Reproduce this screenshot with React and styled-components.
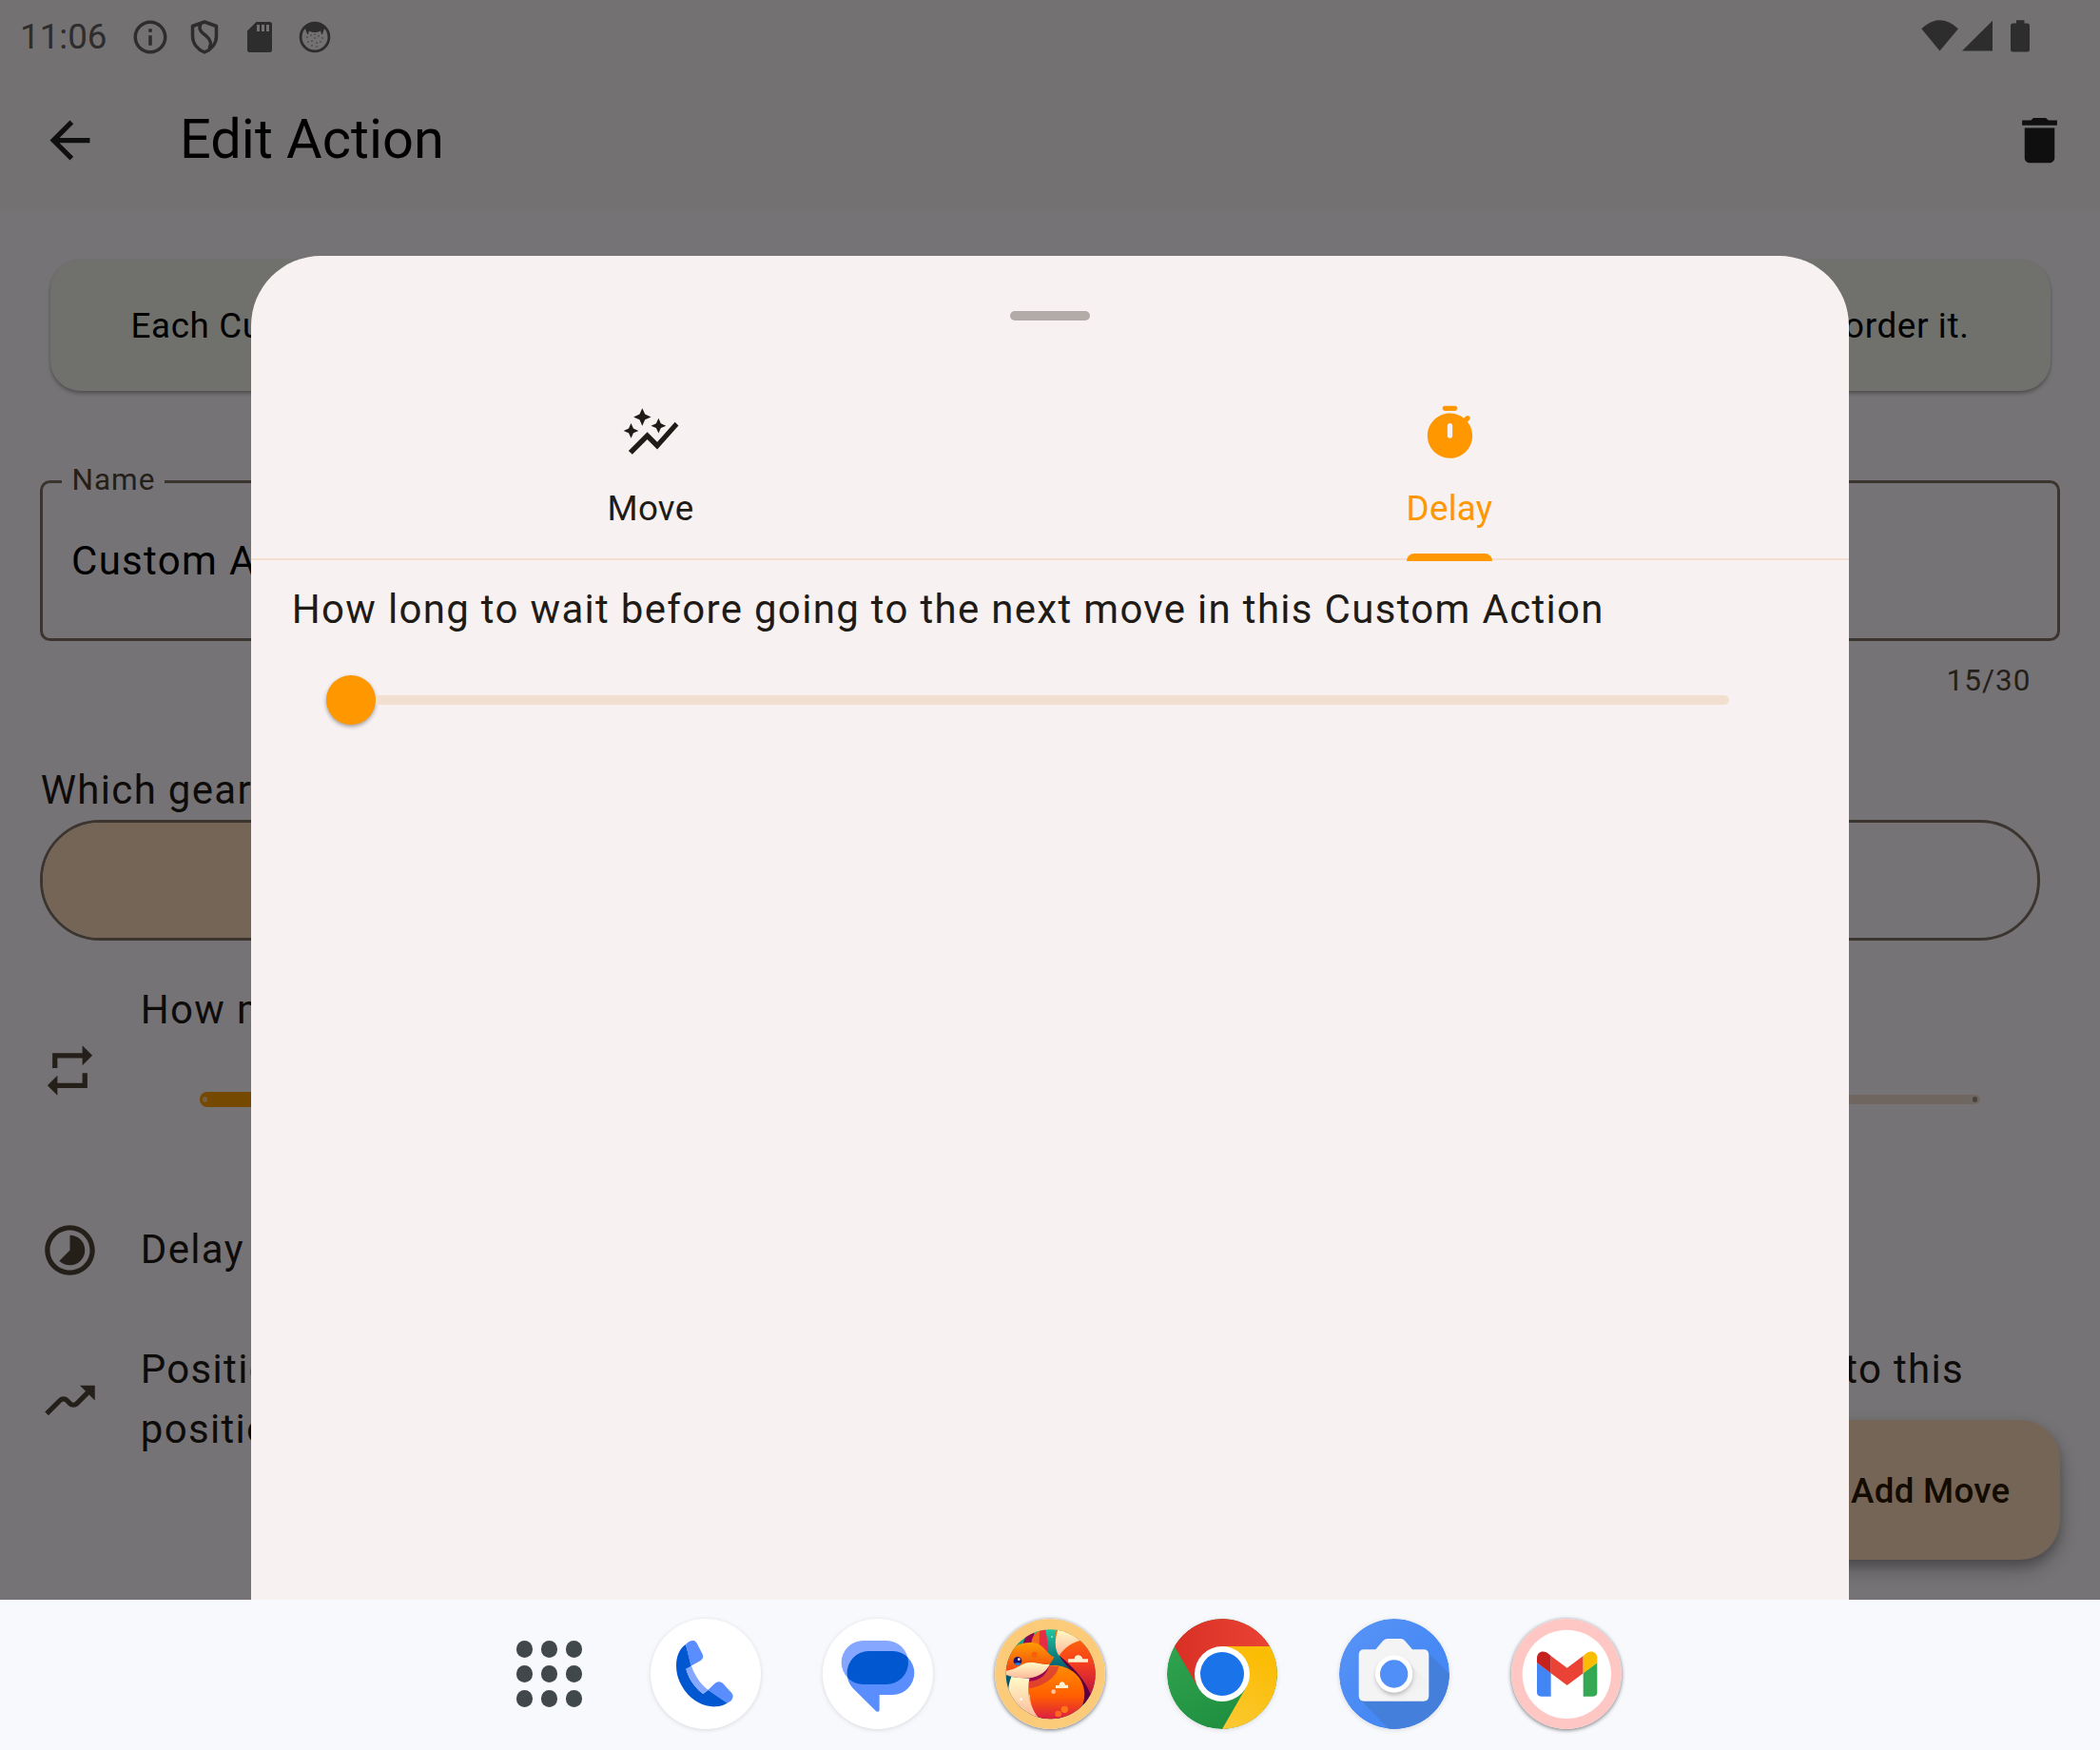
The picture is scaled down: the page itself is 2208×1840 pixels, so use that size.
import React from 'react';
import styled, { createGlobalStyle } from 'styled-components';
import { MdArrowBack, MdDelete, MdRepeat, MdTimelapse, MdMoving, MdAutoGraph } from 'react-icons/md';

const GlobalStyle = createGlobalStyle`
  * { box-sizing: border-box; }
  body { margin: 0; background: #f8f9fd; font-family: Roboto, "Liberation Sans", sans-serif; }
`;

const Device = styled.div`
  width: 2208px;
  height: 1840px;
  display: flex;
  flex-direction: column;
  overflow: hidden;
`;

const Screen = styled.div`
  position: relative;
  height: 1682px;
  flex: none;
  display: flex;
  flex-direction: column;
  background: #fffbff;
  overflow: hidden;
`;

const StatusBar = styled.div`
  height: 74px;
  flex: none;
  display: flex;
  align-items: center;
  justify-content: space-between;
  padding: 3px 71px 0 21px;
  background: #fdf6f8;
  color: #626262;
`;

const StatusGroup = styled.div`
  display: flex;
  align-items: center;
  gap: ${(p) => p.$gap}px;
`;

const Clock = styled.span`
  font-size: 36.75px;
  line-height: 44px;
  width: 99.75px;
  white-space: nowrap;
`;

const StatusIcon = styled.svg`
  display: block;
  fill: currentColor;
`;

const SignalIcon = styled(StatusIcon)`
  margin-bottom: 2px;
`;

const AppBar = styled.header`
  height: 147px;
  flex: none;
  display: flex;
  align-items: center;
  padding: 0 32px 0 42px;
  background: #fdf6f8;
  color: #222;
  svg { width: 63px; height: 63px; flex: none; }
`;

const Title = styled.h1`
  flex: 1;
  margin: 0 0 0 84px;
  padding-bottom: 3px;
  font-size: 57.75px;
  line-height: 74px;
  font-weight: 400;
  color: #000;
`;

const Content = styled.main`
  display: flex;
  flex-direction: column;
  padding: 52px 42px 0;
  color: #1f1b16;
`;

const InfoCard = styled.div`
  display: flex;
  justify-content: space-between;
  margin: 0 10.5px;
  padding: 44px 85px 41px;
  border-radius: 31.5px;
  background: #f4f3ec;
  box-shadow: 0 3px 4px rgba(0, 0, 0, 0.26), 0 1px 3px rgba(0, 0, 0, 0.1);
  color: #000;
  font-size: 36.75px;
  line-height: 52.5px;
  letter-spacing: 0.656px;
  white-space: nowrap;
`;

const Field = styled.fieldset`
  height: 180px;
  margin: 83px 0 0;
  padding: 0 28.5px;
  border: 3px solid #837468;
  border-radius: 10.5px;
`;

const FieldLabel = styled.legend`
  height: 26px;
  padding: 0 9.5px 0 11px;
  margin-left: -9px;
  font-size: 31.5px;
  line-height: 22px;
  letter-spacing: 1px;
  color: #51453a;
`;

const FieldValue = styled.div`
  padding: 38px 0 0 1.5px;
  font-size: 42px;
  line-height: 63px;
  letter-spacing: 1.3125px;
  color: #000;
  white-space: nowrap;
`;

const Counter = styled.div`
  margin: 21px 30.5px 0 0;
  text-align: right;
  font-size: 31.5px;
  line-height: 42px;
  letter-spacing: 1.05px;
  color: #51453a;
`;

const BodyText = styled.p`
  margin: 0;
  padding-left: 0.8px;
  font-size: 42px;
  line-height: 63px;
  letter-spacing: 1.3125px;
  white-space: nowrap;
`;

const GearLabel = styled(BodyText)`
  margin-top: 62px;
`;

const Segmented = styled.div`
  display: flex;
  height: 126.5px;
  margin: 0.5px 21px 0 0;
  border: 3px solid #837468;
  border-radius: 63px;
  overflow: hidden;
`;

const Segment = styled.div`
  flex: 1;
  background: ${(p) => (p.$selected ? '#ffddbc' : 'transparent')};
`;

const Setting = styled.section`
  display: flex;
  align-items: center;
  gap: 42px;
  height: ${(p) => p.$height}px;
  margin-top: ${(p) => p.$top}px;
  > svg { width: 63px; height: 63px; margin-top: ${(p) => p.$iconDrop || 1}px; color: #51453a; flex: none; }
`;

const SettingBody = styled.div`
  flex: 1;
`;

const TextEnds = styled.div`
  display: flex;
  justify-content: space-between;
  padding-right: 101px;
`;

const RepeatSlider = styled.div`
  display: flex;
  align-items: center;
  height: 127px;
  padding: 0 84px 0 63px;
`;

const ActiveTrack = styled.div`
  display: flex;
  align-items: center;
  width: 400px;
  height: 15.75px;
  padding-left: 3px;
  border-radius: 8px 0 0 8px;
  background: #ff9f00;
`;

const InactiveTrack = styled.div`
  flex: 1;
  display: flex;
  align-items: center;
  justify-content: flex-end;
  height: 10.5px;
  padding-right: 3px;
  border-radius: 0 5.25px 5.25px 0;
  background: #f2dfd0;
`;

const Tick = styled.span`
  width: 5.25px;
  height: 5.25px;
  border-radius: 50%;
  background: ${(p) => p.$color};
`;

const Fab = styled.button`
  position: absolute;
  right: 42px;
  bottom: 42px;
  width: 330px;
  height: 147px;
  padding: 3px 52.5px 0 0;
  border: 0;
  border-radius: 42px;
  background: #ffddbc;
  box-shadow: 0 10px 22px rgba(0, 0, 0, 0.24), 0 6px 12px rgba(0, 0, 0, 0.2);
  color: #2b1700;
  font: 500 36.75px/52.5px Roboto, "Liberation Sans", sans-serif;
  letter-spacing: 0.2625px;
  text-align: right;
`;

const Scrim = styled.div`
  position: absolute;
  inset: 0;
  background: rgba(0, 0, 0, 0.54);
`;

const Sheet = styled.div`
  position: absolute;
  left: 264px;
  top: 269px;
  bottom: 0;
  width: 1680px;
  display: flex;
  flex-direction: column;
  border-radius: 73.5px 73.5px 0 0;
  background: #f8f1f1;
  color: #1f1b16;
`;

const HandleArea = styled.div`
  height: 126px;
  display: flex;
  align-items: center;
  justify-content: center;
`;

const Handle = styled.div`
  width: 84px;
  height: 10.5px;
  border-radius: 5.25px;
  background: #b2aba7;
`;

const Tabs = styled.div`
  display: flex;
  height: 194px;
  border-bottom: 2px solid #f2dfd0;
`;

const Tab = styled.div`
  flex: 1;
  display: flex;
  flex-direction: column;
  align-items: center;
  height: 194.5px;
  padding-top: 28.5px;
  color: ${(p) => (p.$active ? '#ff9800' : '#1f1b16')};
  svg { width: 63px; height: 63px; flex: none; fill: currentColor; }
`;

const TabLabel = styled.span`
  margin-top: 22px;
  font-size: 36.75px;
  line-height: 52.5px;
  letter-spacing: 0.26px;
`;

const Indicator = styled.div`
  width: 90px;
  height: 8px;
  margin-top: auto;
  border-radius: 7.875px 7.875px 0 0;
  background: #ff9800;
`;

const Question = styled(BodyText)`
  margin: 20px 42px 0;
`;

const DelaySlider = styled.div`
  display: flex;
  align-items: center;
  height: 126px;
  margin-top: 1px;
  padding: 0 126px 0 78.5px;
`;

const Thumb = styled.div`
  width: 52.5px;
  height: 52.5px;
  flex: none;
  border-radius: 50%;
  background: #ff9800;
  box-shadow: 0 2px 4px rgba(0, 0, 0, 0.35);
`;

const DelayTrack = styled.div`
  flex: 1;
  height: 10.5px;
  border-radius: 0 5.25px 5.25px 0;
  background: #f2dfd0;
`;

const Taskbar = styled.nav`
  flex: 1;
  display: flex;
  align-items: center;
  gap: 65px;
  padding: 0 0 2px 535.4px;
  background: #f8f9fd;
`;

const AppGrid = styled.div`
  width: 84px;
  display: grid;
  grid-template-columns: repeat(3, 17.4px);
  gap: 8.6px;
  justify-content: center;
`;

const GridDot = styled.span`
  height: 17.4px;
  border-radius: 50%;
  background: #41484b;
`;

const AppIcon = styled.svg`
  width: 116px;
  height: 116px;
  flex: none;
  display: block;
  border-radius: 50%;
  box-shadow: 0 1px ${(p) => (p.$strong ? 4 : 5)}px rgba(0, 0, 0, ${(p) => (p.$strong ? 0.55 : 0.13)});
`;

const TimerIcon = () => (
  <svg viewBox="0 0 24 24">
    <path fillRule="evenodd" d="M14 1h-4c-.55 0-1 .45-1 1s.45 1 1 1h4c.55 0 1-.45 1-1s-.45-1-1-1zm-2 13c.55 0 1-.45 1-1V9c0-.55-.45-1-1-1s-1 .45-1 1v4c0 .55.45 1 1 1zm7.03-6.61l.75-.75c.38-.38.39-1.01 0-1.4l-.01-.01c-.39-.39-1.01-.38-1.4 0l-.75.75C16.07 4.74 14.12 4 12 4c-4.8 0-8.88 3.96-9 8.76C2.87 17.84 6.94 22 12 22c4.98 0 9-4.03 9-9 0-2.12-.74-4.07-1.97-5.61z" />
  </svg>
);

const Phone = () => (
  <AppIcon viewBox="493 66 348 348">
    <circle cx="667" cy="240" r="174" fill="#fff" />
    <path fill="#0057cf" d="M604 147C574 167 567 213 581 255C602 312 651 346 700 343C715 343 727 338 736 331L675 290L659 303C632 283 612 252 605 224L622 215Z" />
    <path fill="#5a8eff" d="M604 147C611 138 622 132 632 136C638 139 640 145 643 151L657 178C661 187 658 193 651 198L620 215Z" />
    <path fill="#85a7ff" d="M605 224L622 215C633 245 650 272 675 291L659 303C632 283 612 252 605 224Z" />
    <path fill="#5a8eff" d="M674 291L696 270C706 262 715 264 722 271L747 298C755 307 754 314 749 322C745 328 737 332 731 330Z" />
  </AppIcon>
);

const Messages = () => (
  <AppIcon viewBox="1036 66 348 348">
    <defs>
      <clipPath id="bubbleBack"><rect x="1095" y="135" width="211" height="138" rx="69" /></clipPath>
    </defs>
    <circle cx="1210" cy="240" r="174" fill="#fff" />
    <rect x="1095" y="135" width="211" height="138" rx="69" fill="#85a7ff" />
    <path fill="#5a8eff" d="M1182 168H1256A69 69 0 0 1 1256 306H1215V353C1215 360 1207 361 1203 356L1134 288C1119 273 1113 255 1113 237A69 69 0 0 1 1182 168Z" />
    <rect x="1113" y="168" width="212" height="138" rx="69" fill="#0057cf" clipPath="url(#bubbleBack)" />
  </AppIcon>
);

const Fox = () => (
  <AppIcon $strong viewBox="78 66 348 348">
    <defs>
      <clipPath id="foxClip"><circle cx="254" cy="241" r="141" /></clipPath>
      <linearGradient id="foxSky" x1="0" y1="0" x2="0" y2="1"><stop offset="0" stopColor="#22c79e" /><stop offset=".42" stopColor="#056070" /><stop offset="1" stopColor="#063c59" /></linearGradient>
      <linearGradient id="foxTail" x1="0" y1="0" x2="0" y2="1"><stop offset="0" stopColor="#ff7200" /><stop offset=".45" stopColor="#f6401f" /><stop offset="1" stopColor="#b0054d" /></linearGradient>
      <linearGradient id="foxBody" x1="0" y1="0" x2="0" y2="1"><stop offset="0" stopColor="#ff8d00" /><stop offset=".55" stopColor="#ff5d00" /><stop offset="1" stopColor="#d71848" /></linearGradient>
      <linearGradient id="foxHead" x1="0" y1="0" x2="0" y2="1"><stop offset="0" stopColor="#ff9e00" /><stop offset="1" stopColor="#ef3c12" /></linearGradient>
      <linearGradient id="foxCream" x1="0" y1="0" x2="0" y2="1"><stop offset="0" stopColor="#fffcc8" /><stop offset="1" stopColor="#ffb99b" /></linearGradient>
    </defs>
    <circle cx="252" cy="240" r="174" fill="#fccb79" />
    <g clipPath="url(#foxClip)">
      <rect x="110" y="98" width="290" height="290" fill="url(#foxSky)" />
      <path fill="url(#foxTail)" d="M272 100H400V310L384 333C376 270 330 225 281 182C268 160 265 130 272 100Z" />
      <path fill="#5e003d" d="M281 182C318 213 372 262 385 322L358 345L345 262C335 240 300 215 281 182Z" />
      <path fill="url(#foxCream)" d="M278 98C266 130 266 165 281 182C301 153 324 141 347 135C327 112 303 103 278 98Z" />
      <path fill="#8e0750" d="M168 144C170 125 183 112 203 105L199 148Z" />
      <path fill="#f46a19" d="M192 148C194 124 206 110 219 103C228 122 225 140 216 154Z" />
      <path fill="#e72c45" d="M219 103L237 97C242 130 251 151 244 184L218 152Z" />
      <path fill="url(#foxBody)" d="M246 214C302 206 354 239 360 293C366 342 337 378 275 390H209C180 350 178 302 187 256C214 255 233 240 246 214Z" />
      <path fill="#d22943" opacity=".65" d="M246 214L280 216C272 251 234 278 185 286L187 250Z" />
      <path fill="#99064d" d="M185 238L250 206C246 240 220 262 186 263Z" />
      <path fill="url(#foxCream)" d="M130 249L187 255C178 300 187 345 215 380L170 382C120 352 110 300 130 249Z" />
      <path fill="url(#foxHead)" d="M110 239V198C124 151 162 139 195 141C233 143 239 176 265 187C252 218 230 230 202 235C162 242 110 239 110 239Z" />
      <path fill="url(#foxCream)" d="M110 231C151 226 158 207 187 204C214 203 228 213 251 209C233 252 176 266 110 242Z" />
      <circle cx="203" cy="179" r="9" fill="#f95e09" />
      <circle cx="150" cy="199" r="13" fill="#17116f" />
      <path fill="#287ed8" d="M139 207A13 13 0 0 0 161 207Q150 202 139 207Z" />
      <circle cx="154" cy="194" r="4" fill="#fff3d2" />
      <path fill="#fff1d0" d="M309 193H329C329 177 352 177 355 193H372V203H309ZM270 276H281C281 261 298 261 300 275H309V285H270Z" />
      <circle cx="263" cy="296" r="7" fill="#ffc39f" />
      <circle cx="298" cy="352" r="11" fill="#ff751c" />
      <circle cx="278" cy="366" r="10" fill="#ff661f" />
      <circle cx="161" cy="320" r="4" fill="#fff" />
      <circle cx="258" cy="123" r="3" fill="#7cf0c9" />
      <path fill="none" stroke="#fff0d6" strokeWidth="2" d="M187 305C188 335 197 358 214 378" />
    </g>
  </AppIcon>
);

const Chrome = () => (
  <AppIcon viewBox="622 66 348 348">
    <defs>
      <linearGradient id="chRed" x1="0" x2="1"><stop offset="0" stopColor="#d93025" /><stop offset="1" stopColor="#ea4335" /></linearGradient>
      <linearGradient id="chYellow" x1="0" y1="1" x2=".4" y2="0"><stop offset="0" stopColor="#fcc934" /><stop offset="1" stopColor="#fbbc04" /></linearGradient>
      <linearGradient id="chGreen" x1="0" y1="0" x2=".6" y2="1"><stop offset="0" stopColor="#34a853" /><stop offset="1" stopColor="#1e8e3e" /></linearGradient>
    </defs>
    <circle cx="796" cy="240" r="174" fill="url(#chGreen)" />
    <path fill="url(#chYellow)" d="M796 153H946.7A174 174 0 0 1 796 414L871.3 283.5L796 240Z" />
    <path fill="url(#chRed)" d="M796 240L720.7 283.5L645.3 153A174 174 0 0 1 946.7 153H796Z" />
    <circle cx="796" cy="240" r="87" fill="#fff" />
    <circle cx="796" cy="240" r="69" fill="#1a73e8" />
  </AppIcon>
);

const Camera = () => (
  <AppIcon viewBox="86 66 348 348">
    <defs>
      <clipPath id="camClip"><circle cx="260" cy="240" r="174" /></clipPath>
      <linearGradient id="camBg" x1="0" y1="0" x2="1" y2="1"><stop offset="0" stopColor="#5a95f7" /><stop offset=".6" stopColor="#4688f4" /></linearGradient>
      <linearGradient id="camShade" x1="0" y1="0" x2=".8" y2=".9"><stop offset="0" stopColor="#bbb" stopOpacity=".6" /><stop offset="1" stopColor="#eee" stopOpacity="0" /></linearGradient>
      <filter id="lensShadow" x="-30%" y="-30%" width="160%" height="160%"><feGaussianBlur stdDeviation="6" /></filter>
    </defs>
    <circle cx="260" cy="240" r="174" fill="url(#camBg)" />
    <path clipPath="url(#camClip)" fill="#447fdb" d="M364 170L450 256V430H258L153 321Z" />
    <path fill="#f4f4f4" d="M165 163H201L225 135Q231 129 238 129H281Q288 129 293 135L317 163H352Q369 163 369 180V309Q369 326 352 326H165Q148 326 148 309V180Q148 163 165 163Z" />
    <path fill="url(#camShade)" d="M300 200L369 268V326H264L217 280Z" />
    <circle cx="260" cy="248" r="58" fill="#777" opacity=".45" filter="url(#lensShadow)" />
    <circle cx="259" cy="240" r="59" fill="#fff" />
    <circle cx="259" cy="240" r="44" fill="#4f8ff7" />
  </AppIcon>
);

const Gmail = () => (
  <AppIcon $strong viewBox="627 66 348 348">
    <circle cx="801" cy="240" r="174" fill="#fec7c3" />
    <circle cx="802" cy="241" r="140" fill="#fff" />
    <path fill="#4285f4" d="M708 205L752 237V311H721Q708 311 708 298Z" />
    <path fill="#34a853" d="M898 205L854 237V311H885Q898 311 898 298Z" />
    <path fill="#ea4335" d="M752 183L803 221L854 183V238L803 276L752 238Z" />
    <path fill="#c5221f" d="M708 205V190C708 171 728 163 744 176L752 183V238Z" />
    <path fill="#fbbc04" d="M898 205V190C898 171 878 163 862 176L854 183V238Z" />
  </AppIcon>
);

const StatusIcons = () => (
  <>
    <StatusIcon width="42" height="42" viewBox="0 0 24 24">
      <path d="M11 7h2v2h-2zm0 4h2v6h-2zm1-9C6.48 2 2 6.48 2 12s4.48 10 10 10 10-4.48 10-10S17.52 2 12 2zm0 18c-4.41 0-8-3.59-8-8s3.59-8 8-8 8 3.59 8 8-3.59 8-8 8z" />
    </StatusIcon>
    <StatusIcon width="42" height="42" viewBox="0 0 42 42">
      <g fill="none" stroke="currentColor" strokeWidth="3.5" strokeLinejoin="round">
        <path d="M21 5L33.5 9.5V20C33.5 28 28 34 21 37C14 34 8.500 28 8.500 20V9.500Z" />
        <path d="M17 7C14 13 18 16 23 20C29 25 28 29 26 33" />
      </g>
    </StatusIcon>
    <StatusIcon width="42" height="42" viewBox="0 0 42 42">
      <path fillRule="evenodd" d="M17.500 5H31.500Q34 5 34 7.500V34.500Q34 37 31.500 37H10.500Q8 37 8 34.500V14.500ZM18 8V15H21V8ZM23 8V15H26V8ZM28 8V15H31V8Z" />
    </StatusIcon>
    <StatusIcon width="42" height="42" viewBox="0 0 42 42">
      <circle cx="21" cy="21" r="14.900" fill="none" stroke="currentColor" strokeWidth="2.800" />
      <path d="M10.500 10.500Q21 1 31.500 10.500L30 15Q29 19 28 18L27 14.500Q21 17.500 15 14.500L14 18Q13 19 12 15Z" />
      {[[13, 21], [17, 19], [21, 22], [25, 20], [29, 22], [14, 26], [18, 25], [23, 27], [27, 26], [18, 30], [23, 31], [21, 18]].map(([x, y]) => (
        <circle key={`${x}-${y}`} cx={x} cy={y} r=".7" />
      ))}
    </StatusIcon>
  </>
);

const SignalIcons = () => (
  <SignalIcon width="117" height="36" viewBox="0 0 117 36">
    <path d="M.3 10.200Q19.500-7.500 39 10.200L19.500 33.500Z" />
    <path d="M75 1.700V33.500H43Z" />
    <path d="M100 1.300H108.500V4.500H111.500Q114 4.500 114 7V32Q114 34.500 111.500 34.500H96.500Q94 34.500 94 32V7Q94 4.500 96.500 4.500H100Z" />
  </SignalIcon>
);

export default function App() {
  return (
    <Device>
      <GlobalStyle />
      <Screen>
        <StatusBar>
          <StatusGroup $gap={15.75}>
            <Clock>11:06</Clock>
            <StatusIcons />
          </StatusGroup>
          <SignalIcons />
        </StatusBar>
        <AppBar>
          <MdArrowBack />
          <Title>Edit Action</Title>
          <MdDelete />
        </AppBar>
        <Content>
          <InfoCard>
            <span>Each Custom</span>
            <span>reorder it.</span>
          </InfoCard>
          <Field>
            <FieldLabel>Name</FieldLabel>
            <FieldValue>Custom Action</FieldValue>
          </Field>
          <Counter>15/30</Counter>
          <GearLabel>Which gear</GearLabel>
          <Segmented>
            <Segment $selected />
            <Segment />
          </Segmented>
          <Setting $height={190} $top={41}>
            <MdRepeat />
            <SettingBody>
              <BodyText>How many</BodyText>
              <RepeatSlider>
                <ActiveTrack><Tick $color="#ffcf94" /></ActiveTrack>
                <InactiveTrack><Tick $color="#a08f84" /></InactiveTrack>
              </RepeatSlider>
            </SettingBody>
          </Setting>
          <Setting $height={126} $top={31}>
            <MdTimelapse />
            <BodyText>Delay</BodyText>
          </Setting>
          <Setting $height={126} $top={31} $iconDrop={3}>
            <MdMoving />
            <SettingBody>
              <TextEnds>
                <BodyText>Position</BodyText>
                <BodyText>to this</BodyText>
              </TextEnds>
              <BodyText>position</BodyText>
            </SettingBody>
          </Setting>
        </Content>
        <Fab>Add Move</Fab>
        <Scrim />
        <Sheet>
          <HandleArea><Handle /></HandleArea>
          <Tabs>
            <Tab>
              <MdAutoGraph />
              <TabLabel>Move</TabLabel>
            </Tab>
            <Tab $active>
              <TimerIcon />
              <TabLabel>Delay</TabLabel>
              <Indicator />
            </Tab>
          </Tabs>
          <Question>How long to wait before going to the next move in this Custom Action</Question>
          <DelaySlider>
            <Thumb />
            <DelayTrack />
          </DelaySlider>
        </Sheet>
      </Screen>
      <Taskbar>
        <AppGrid>
          {Array.from({ length: 9 }, (_, i) => <GridDot key={i} />)}
        </AppGrid>
        <Phone />
        <Messages />
        <Fox />
        <Chrome />
        <Camera />
        <Gmail />
      </Taskbar>
    </Device>
  );
}
